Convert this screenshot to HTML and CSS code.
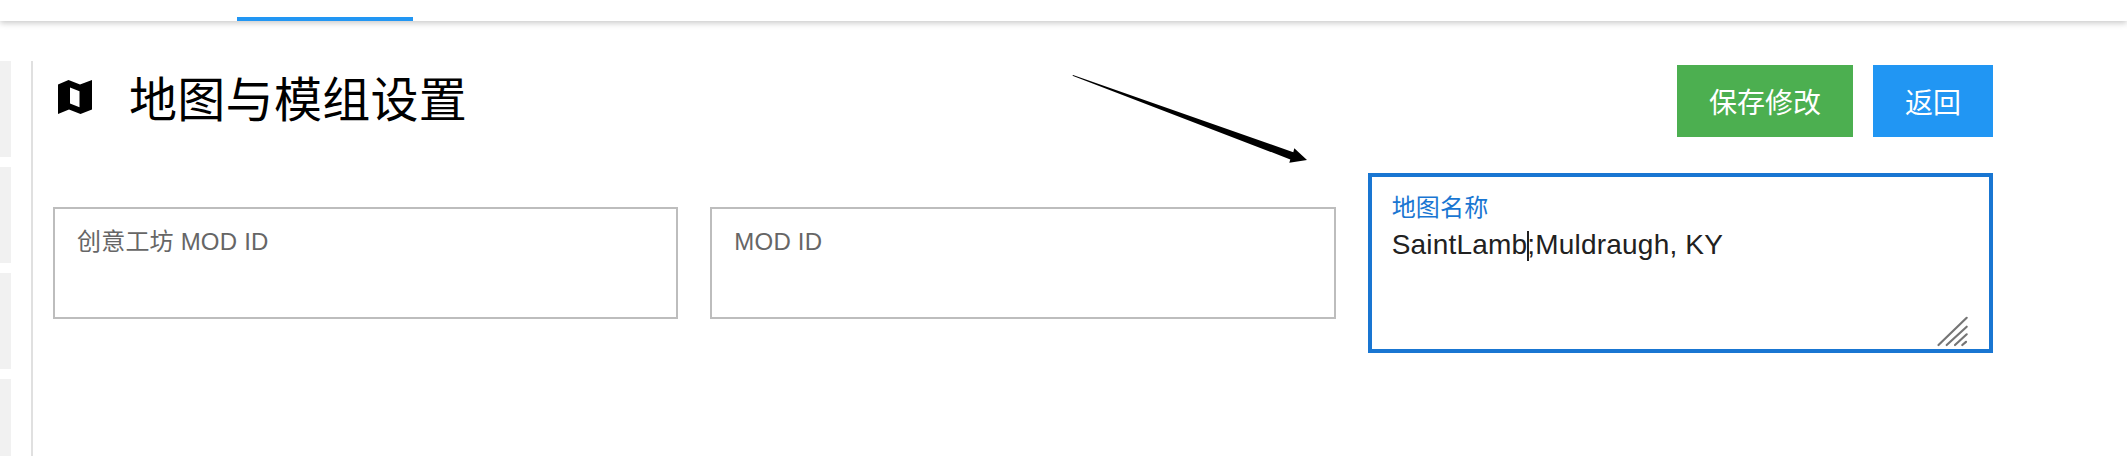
FILE: index.html
```html
<!DOCTYPE html>
<html lang="zh-CN">
<head>
  <meta charset="UTF-8">
  <meta name="viewport" content="width=device-width, initial-scale=1.0">
  <title>地图与模组设置</title>
  <link rel="stylesheet" href="styles.css">
</head>
<body>

<nav class="top-nav">
  <div class="nav-tab"></div>
</nav>

<div class="page">
  <aside class="side-cards">
    <div class="side-card"></div>
    <div class="side-card"></div>
    <div class="side-card"></div>
    <div class="side-card"></div>
  </aside>

  <main class="content">
    <div class="section-head">
      <h1 class="section-title">
        <svg class="map-icon" viewBox="0 0 34 34">
          <path fill-rule="evenodd" d="M0 4.500 10.500 0 22 4.500 34 0V29.500L22.500 34 11 29.500 0 34ZM12 7.500V23.500L21.500 27.200V11.200Z"/>
        </svg>
        地图与模组设置
      </h1>
      <div class="actions">
        <button class="btn btn-save">保存修改</button>
        <button class="btn btn-back">返回</button>
      </div>
    </div>

    <div class="fields">
      <div class="field">
        <span class="field-label">创意工坊 MOD ID</span>
      </div>
      <div class="field">
        <span class="field-label">MOD ID</span>
      </div>
      <div class="field field-active">
        <span class="field-label">地图名称</span>
        <div class="field-value">SaintLamb<span class="caret"></span>;Muldraugh, KY</div>
        <svg class="resize-handle" viewBox="0 0 32 32">
          <path d="M2.500 31 30.700 3.800M10.700 31 30.700 12.700M19 31 30.700 20.300M26.300 31 30 27.800"/>
        </svg>
      </div>
    </div>
  </main>
</div>

<!-- 标注箭头 -->
<svg class="note-arrow" viewBox="0 0 240 92">
  <path d="M0 0 220.300 77.200 221.300 73.300 234 85 216.300 87.700 217.300 84.400 -0.500 0.800Z"/>
</svg>

</body>
</html>
```

FILE: styles.css
```css
html, body {
  height: 100%;
}

body {
  margin: 0;
  overflow: hidden;
  background-color: white;
  font-family: "Liberation Sans", "Noto Sans CJK SC", sans-serif;
  position: relative;
}

.top-nav {
  height: 21px;
  padding-left: 237px;
  background-color: white;
  box-shadow: 0 2px 6px rgba(0, 0, 0, 0.22);
  display: flex;
  align-items: flex-end;
}

.nav-tab {
  width: 176px;
  height: 4px;
  background-color: #2196f3;
}

.page {
  display: flex;
  padding-top: 40px;
  padding-right: 134px;
  height: 395px;
}

.side-cards {
  width: 11px;
  flex-shrink: 0;
  display: flex;
  flex-direction: column;
  gap: 10px;
  margin-right: 20px;
}

.side-card {
  flex-shrink: 0;
  height: 96px;
  background-color: #f1f1f1;
}

.content {
  flex: 1;
  border-left: 2px solid #e0e0e0;
  padding-left: 20px;
}

.section-head {
  display: flex;
  justify-content: space-between;
  align-items: flex-start;
}

.section-title {
  margin: 0;
  height: 70px;
  padding-left: 5px;
  display: flex;
  align-items: center;
  gap: 37px;
  font-size: 48px;
  font-weight: normal;
  letter-spacing: 0.3px;
  color: black;
}

.map-icon {
  width: 34px;
  height: 34px;
  flex-shrink: 0;
  margin-top: 2px;
}

.actions {
  display: flex;
  gap: 20px;
  margin-top: 4px;
}

.btn {
  height: 72px;
  padding: 0 32px;
  border: none;
  color: white;
  font-family: inherit;
  font-size: 28px;
}

.btn-save {
  background-color: #4caf50;
}

.btn-back {
  background-color: #2196f3;
}

.fields {
  display: flex;
  align-items: center;
  gap: 32px;
  margin-top: 36px;
}

.field {
  flex: 1;
  box-sizing: border-box;
  height: 112px;
  padding: 19px 22px;
  border: 2px solid #bdbdbd;
  position: relative;
}

.field-label {
  display: block;
  font-size: 24px;
  line-height: 28px;
  letter-spacing: 0.2px;
  color: #666;
}

.field-active {
  height: 180px;
  padding: 17px 20px;
  border: 4px solid #1976d2;
}

.field-active .field-label {
  color: #1976d2;
}

.field-value {
  margin-top: 6px;
  font-size: 28px;
  line-height: 34px;
  letter-spacing: 0.2px;
  color: #212121;
}

.caret {
  display: inline-block;
  width: 0;
  height: 30px;
  border-left: 2px solid #212121;
  margin-right: -2px;
  vertical-align: -7px;
}

.resize-handle {
  position: absolute;
  right: 21px;
  bottom: 3px;
  width: 32px;
  height: 32px;
  stroke: #757575;
  stroke-width: 2.2px;
  stroke-linecap: round;
  fill: none;
  overflow: visible;
}

.note-arrow {
  position: absolute;
  left: 1073px;
  top: 75px;
  width: 240px;
  height: 92px;
  overflow: visible;
}
```
